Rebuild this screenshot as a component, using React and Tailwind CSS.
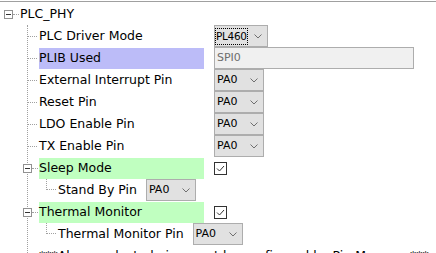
function MinusBox({ className = "" }) {
  return (
    <span className={`flex h-[9px] w-[9px] shrink-0 items-center justify-center border border-[#919191] bg-white ${className}`}>
      <span className="h-px w-[5px] bg-[#333333]" />
    </span>
  )
}

function Chevron() {
  return (
    <svg width="8" height="5" viewBox="0 0 8 5" className="shrink-0">
      <polyline points="0.5,0.5 4,4 7.5,0.5" fill="none" stroke="#6f6f6f" strokeWidth="1" />
    </svg>
  )
}

function Select({ value, width = "w-[50px]", focus = false }) {
  return (
    <div className={`flex h-[22px] ${width} shrink-0 items-center justify-between border border-[#adadad] bg-[#e1e1e1] pr-[5px] text-[11px] text-black`}>
      {focus ? (
        <span className="ml-0 border border-dotted border-black text-[10.5px] leading-[15px] tracking-[-0.3px]">{value}</span>
      ) : (
        <span className="pl-[2px]">{value}</span>
      )}
      <Chevron />
    </div>
  )
}

function Checkbox() {
  return (
    <span className="flex h-[13px] w-[13px] items-center justify-center border border-[#333333] bg-white">
      <svg width="11" height="11" viewBox="0 0 11 11">
        <polyline points="2,5.5 4.5,8 9,3" fill="none" stroke="#333333" strokeWidth="1" />
      </svg>
    </span>
  )
}

function Row({ label, highlight, children }) {
  return (
    <div className="flex h-[22px] items-center">
      <span className="mr-[2px] w-[9px] border-t border-dotted border-[#a0a0a0]" />
      <div className={`flex h-[21px] w-[165px] shrink-0 items-center ${highlight || ""}`}>{label}</div>
      <div className="ml-[10px] flex items-center">{children}</div>
    </div>
  )
}

function GroupRow({ label, color }) {
  return (
    <div className="flex h-[22px] items-center">
      <MinusBox className="-ml-[5px]" />
      <span className="mr-px w-[6px] border-t border-dotted border-[#a0a0a0]" />
      <div className={`flex h-[21px] w-[165px] shrink-0 items-center ${color}`}>{label}</div>
      <div className="ml-[10px] flex items-center">
        <Checkbox />
      </div>
    </div>
  )
}

function SubRow({ label, value }) {
  return (
    <div className="flex h-[22px] items-center">
      <span className="ml-[18px] mr-[2px] h-[11px] w-[10px] self-start border-b border-l border-dotted border-[#a0a0a0]" />
      <span>{label}</span>
      <div className="ml-[9px]">
        <Select value={value} />
      </div>
    </div>
  )
}

export default function App() {
  return (
    <div className="h-[253px] w-[436px] overflow-hidden whitespace-nowrap bg-white pt-px font-['DejaVu_Sans',sans-serif] text-[12.5px] text-black">
      <div className="mb-px h-px bg-[#a0a0a0]" />
      <div className="flex h-[22px] items-center">
        <MinusBox className="ml-[4px]" />
        <span className="mr-px w-[6px] border-t border-dotted border-[#a0a0a0]" />
        <span>PLC_PHY</span>
      </div>
      <div className="ml-[27px] border-l border-dotted border-[#a0a0a0]">
        <Row label="PLC Driver Mode">
          <Select value="PL460" width="w-[54px]" focus />
        </Row>
        <Row label="PLIB Used" highlight="bg-[#bcbcf8]">
          <div className="flex h-[22px] w-[200px] items-center border border-[#adadad] bg-[#f0f0f0] pl-[2px] text-[11px] text-[#6d6d6d]">
            SPI0
          </div>
        </Row>
        <Row label="External Interrupt Pin">
          <Select value="PA0" />
        </Row>
        <Row label="Reset Pin">
          <Select value="PA0" />
        </Row>
        <Row label="LDO Enable Pin">
          <Select value="PA0" />
        </Row>
        <Row label="TX Enable Pin">
          <Select value="PA0" />
        </Row>
        <GroupRow label="Sleep Mode" color="bg-[#c0ffc0]" />
        <SubRow label="Stand By Pin" value="PA0" />
        <GroupRow label="Thermal Monitor" color="bg-[#c0ffc0]" />
        <SubRow label="Thermal Monitor Pin" value="PA0" />
        <div className="flex h-[22px] items-center">
          <span className="mr-[2px] w-[9px] border-t border-dotted border-[#a0a0a0]" />
          <span>***Above selected pins must be configured by Pin Manager***</span>
        </div>
      </div>
    </div>
  )
}
